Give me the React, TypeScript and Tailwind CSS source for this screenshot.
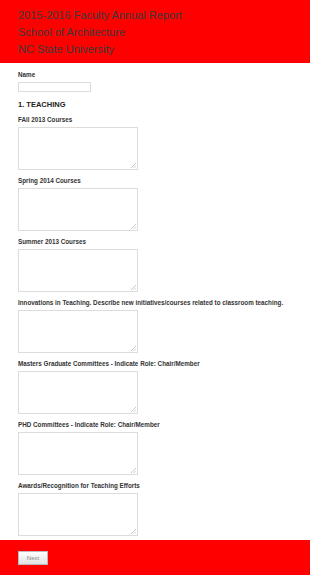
import React from 'react';

const FIELDS = [
  'FAll 2013 Courses',
  'Spring 2014 Courses',
  'Summer 2013 Courses',
  'Innovations in Teaching. Describe new initiatives/courses related to classroom teaching.',
  'Masters Graduate Committees - Indicate Role: Chair/Member',
  'PHD Committees - Indicate Role: Chair/Member',
  'Awards/Recognition for Teaching Efforts',
];

export default function App() {
  return (
    <div className="w-[310px] h-[575px] overflow-hidden bg-white font-['Liberation_Sans',Arial,sans-serif]">
      <header className="h-[63px] bg-[#ff0000] px-[18px] pt-[7px] text-[11px] leading-[17px] text-[#3a3a3a]">
        <div>2015-2016 Faculty Annual Report</div>
        <div>School of Architecture</div>
        <div>NC State University</div>
      </header>

      <main className="px-[18px] pt-[7px]">
        <label className="block whitespace-nowrap text-[6.3px] font-bold leading-[9px] text-[#333]">Name</label>
        <input className="mt-[3px] block h-[10px] w-[73px] border border-[#dcdcdc] bg-white" />

        <h2 className="mt-[8px] text-[7.5px] font-bold leading-[10px] text-[#222]">1. TEACHING</h2>

        {FIELDS.map((f, i) => (
          <div key={f} className={i === 0 ? 'mt-[5px]' : 'mt-[6px]'}>
            <label className="block whitespace-nowrap text-[6.3px] font-bold leading-[9px] text-[#333]">{f}</label>
            <div className="relative mt-[3px] h-[43px] w-[120px]">
              <textarea className="block h-full w-full resize-none border border-[#dcdcdc] bg-white" />
              <svg className="pointer-events-none absolute bottom-[2px] right-[2px]" width="5" height="5" viewBox="0 0 5 5">
                <path d="M5 0L0 5M5 2.5L2.5 5" stroke="#b5b5b5" strokeWidth="0.7" />
              </svg>
            </div>
          </div>
        ))}
      </main>

      <footer className="mt-[4px] h-[40px] bg-[#ff0000] px-[18px] pt-[11px]">
        <button className="block h-[14px] w-[30px] border border-[#bbb] bg-gradient-to-b from-white to-[#e2e2e2] text-[6px] leading-[12px] text-[#888]">
          Next
        </button>
      </footer>
    </div>
  );
}
